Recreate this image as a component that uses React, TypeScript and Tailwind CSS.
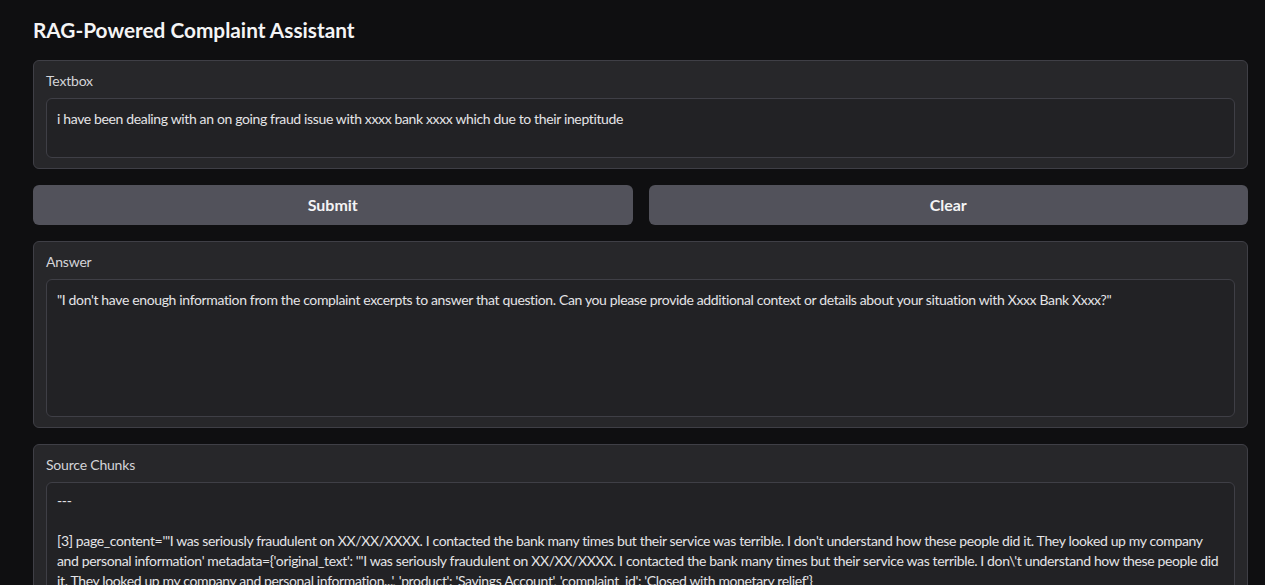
const chunk =
  "[3] page_content='\"I was seriously fraudulent on XX/XX/XXXX. I contacted the bank many times but their service was terrible. I don't understand how these people did it. They looked up my company and personal information' metadata={'original_text': '\"I was seriously fraudulent on XX/XX/XXXX. I contacted the bank many times but their service was terrible. I don\\'t understand how these people did it. They looked up my company and personal information...', 'product': 'Savings Account', 'complaint_id': 'Closed with monetary relief'}";

function Block({ label, children }: { label: string; children: React.ReactNode }) {
  return (
    <div className="rounded-md border border-[#3f3f46] bg-[#27272a] px-3 pt-[10px] pb-[10px]">
      <div className="mb-[7px] text-[14px] leading-5 tracking-[-0.2px] text-[#d4d4d8]">{label}</div>
      {children}
    </div>
  );
}

function Area({ h, children }: { h: string; children: React.ReactNode }) {
  return (
    <div className={`rounded-md border border-[#3f3f46] bg-[#222225] px-[10px] pb-[10px] text-[14px] leading-5 tracking-[-0.36px] text-[#e4e4e7] whitespace-pre-wrap ${h}`}>
      {children}
    </div>
  );
}

export default function App() {
  return (
    <div
      className="h-[585px] overflow-hidden bg-[#0f0f11] pl-[33px] pr-[17px]"
      style={{ fontFamily: "Lato, 'Open Sans', sans-serif" }}
    >
      <h1 className="pt-[16px] pb-[16px] text-[20.8px] font-bold leading-7 text-[#f4f4f5]">
        RAG-Powered Complaint Assistant
      </h1>
      <div className="flex flex-col gap-4">
        <Block label="Textbox">
          <Area h="h-[60px] pt-[10px]">
            i have been dealing with an on going fraud issue with xxxx bank xxxx which due to their ineptitude
          </Area>
        </Block>
        <div className="flex gap-4">
          <button className="h-10 flex-1 rounded-md bg-[#52525b] text-[16px] font-bold text-[#f4f4f5]">
            Submit
          </button>
          <button className="h-10 flex-1 rounded-md bg-[#52525b] text-[16px] font-bold text-[#f4f4f5]">
            Clear
          </button>
        </div>
        <Block label="Answer">
          <Area h="h-[138px] pt-[10px]">
            "I don't have enough information from the complaint excerpts to answer that question. Can you please provide additional context or details about your situation with Xxxx Bank Xxxx?"
          </Area>
        </Block>
        <Block label="Source Chunks">
          <Area h="h-[200px] pt-[8px]">{"---\n\n" + chunk}</Area>
        </Block>
      </div>
    </div>
  );
}
